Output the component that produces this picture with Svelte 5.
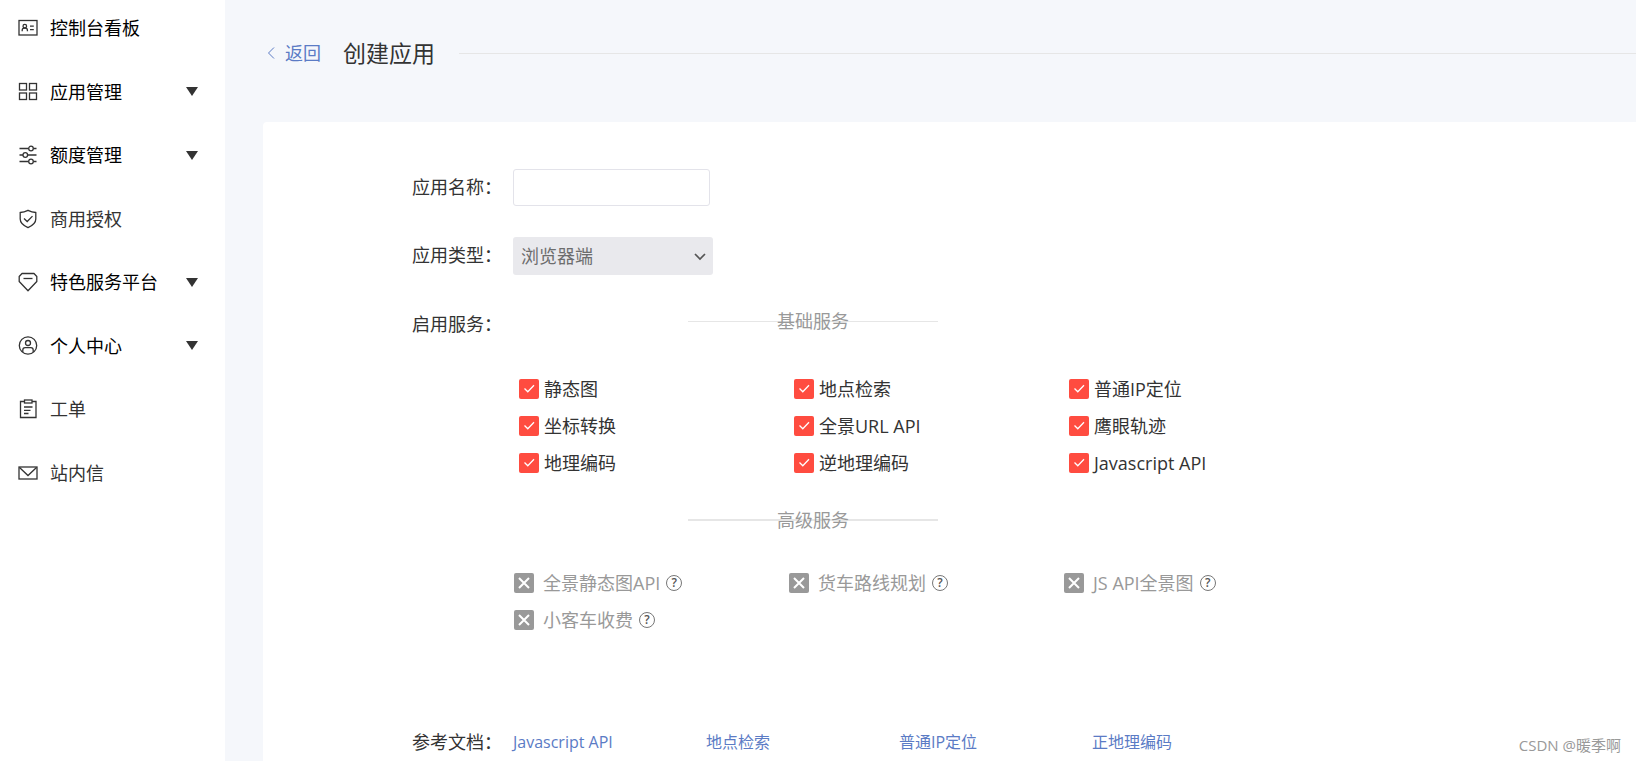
<script lang="ts">
    type MenuItem = { icon: string; label: string; expandable?: boolean; plain?: boolean };

    const menu: MenuItem[] = [
        { icon: 'board', label: '控制台看板' },
        { icon: 'grid', label: '应用管理', expandable: true },
        { icon: 'sliders', label: '额度管理', expandable: true },
        { icon: 'shield', label: '商用授权', plain: true },
        { icon: 'gem', label: '特色服务平台', expandable: true },
        { icon: 'user', label: '个人中心', expandable: true },
        { icon: 'ticket', label: '工单', plain: true },
        { icon: 'mail', label: '站内信', plain: true }
    ];

    let basicServices = $state([
        { name: '静态图', enabled: true },
        { name: '地点检索', enabled: true },
        { name: '普通IP定位', enabled: true },
        { name: '坐标转换', enabled: true },
        { name: '全景URL API', enabled: true },
        { name: '鹰眼轨迹', enabled: true },
        { name: '地理编码', enabled: true },
        { name: '逆地理编码', enabled: true },
        { name: 'Javascript API', enabled: true }
    ]);

    const advancedServices = ['全景静态图API', '货车路线规划', 'JS API全景图', '小客车收费'];
    const docs = ['Javascript API', '地点检索', '普通IP定位', '正地理编码'];

    let appName = $state('');
</script>

{#snippet menuIcon(name: string)}
    <svg class="menu-icon" width="20" height="20" viewBox="0 0 20 20" fill="none" stroke="currentColor" stroke-width="1.3" aria-hidden="true">
        {#if name === 'board'}
            <rect x="1" y="2.5" width="18" height="14.5" />
            <path d="M4.2 13.2V12q0-1.8 2.6-1.8T9.4 12v1.2M12 8.2h3.8M12 11.6h3.8" />
            <circle cx="6.8" cy="8.2" r="1.8" />
        {:else if name === 'grid'}
            <rect x="1.5" y="1.5" width="7" height="6.5" />
            <rect x="11.5" y="1.5" width="7" height="6.5" />
            <rect x="1.5" y="11" width="7" height="6.5" />
            <rect x="11.5" y="11" width="7" height="6.5" />
        {:else if name === 'sliders'}
            <path d="M1.5 3.5h9M15.5 3.5h3M1.5 10H5M10 10h8.5M1.5 16.5h9M15.5 16.5h3" />
            <circle cx="13" cy="3.5" r="2.3" />
            <circle cx="7.3" cy="10" r="2.3" />
            <circle cx="13" cy="16.5" r="2.3" />
        {:else if name === 'shield'}
            <path d="M10 1.3q3.8 2 7.8 2.2V10q0 5.2-7.8 8.6Q2.200 15.200 2.200 10V3.500Q6.200 3.300 10 1.300Z" />
            <path d="m6 9.500 3.200 3 5.300-5.400" />
        {:else if name === 'gem'}
            <path d="M4 1.500h12l2.800 3v5L10 18.700 1.200 9.500v-5Z" stroke-linejoin="round" />
            <path d="M5.500 6.500h9" />
        {:else if name === 'user'}
            <circle cx="10" cy="9.500" r="8.700" />
            <circle cx="10" cy="7" r="2.500" />
            <path d="M4.800 16v-2q0-2.300 2.300-2.300h5.800q2.300 0 2.300 2.300v2" />
        {:else if name === 'ticket'}
            <path d="M6.500 2.500h-4v16h15.500v-16h-4" />
            <rect x="6.500" y="1" width="7.500" height="3" />
            <path d="M6 8h8.500M6 11.300h6.500M6 14.500h4.500" />
        {:else}
            <rect x="1" y="4" width="18" height="12" />
            <path d="m1.500 4.500 8.500 8 8.500-8" />
        {/if}
    </svg>
{/snippet}

<div class="page">
    <nav class="sidebar">
        <ul class="menu">
            {#each menu as item}
                <li>
                    <button class="menu-item" class:plain={item.plain} type="button">
                        {@render menuIcon(item.icon)}
                        <span class="menu-label">{item.label}</span>
                        {#if item.expandable}
                            <span class="caret"></span>
                        {/if}
                    </button>
                </li>
            {/each}
        </ul>
    </nav>

    <main class="content">
        <header class="page-header">
            <a class="back" href="#back">
                <svg width="8" height="14" viewBox="0 0 8 14" fill="none" stroke="currentColor" aria-hidden="true">
                    <path d="M7 1.5 1.5 7 7 12.5" />
                </svg>
                返回
            </a>
            <h1>创建应用</h1>
            <div class="header-line"></div>
        </header>

        <form class="panel">
            <div class="row">
                <label class="row-label" for="app-name">应用名称：</label>
                <input id="app-name" class="text-input" type="text" bind:value={appName} />
            </div>

            <div class="row">
                <label class="row-label" for="app-type">应用类型：</label>
                <div class="select-wrap">
                    <select id="app-type" disabled>
                        <option>浏览器端</option>
                    </select>
                    <svg class="select-arrow" width="12" height="8" viewBox="0 0 12 8" fill="none" stroke="currentColor" stroke-width="1.7" aria-hidden="true">
                        <path d="m1 1 5 5 5-5" />
                    </svg>
                </div>
            </div>

            <div class="row">
                <span class="row-label">启用服务：</span>
                <div class="services">
                    <h2 class="section-title">基础服务</h2>
                    <div class="service-grid basic">
                        {#each basicServices as service}
                            <label class="service">
                                <span class="box">
                                    <input type="checkbox" bind:checked={service.enabled} />
                                    <svg viewBox="0 0 20 20" fill="none" stroke="#fff" stroke-width="1.3" aria-hidden="true">
                                        <path d="m5.5 9.5 3.3 3.3L15 6.3" />
                                    </svg>
                                </span>
                                {service.name}
                            </label>
                        {/each}
                    </div>

                    <h2 class="section-title thick">高级服务</h2>
                    <div class="service-grid advanced">
                        {#each advancedServices as name}
                            <div class="service-cell">
                                <label class="service">
                                    <span class="box">
                                        <input type="checkbox" disabled />
                                        <svg viewBox="0 0 20 20" fill="none" stroke="#fff" stroke-width="2" aria-hidden="true">
                                            <path d="m5 5 10 10M15 5 5 15" />
                                        </svg>
                                    </span>
                                    {name}
                                </label>
                                <button class="help" type="button" aria-label="{name}说明">?</button>
                            </div>
                        {/each}
                    </div>
                </div>
            </div>

            <div class="row docs-row">
                <span class="row-label">参考文档：</span>
                <div class="docs">
                    {#each docs as doc}
                        <a href="#doc">{doc}</a>
                    {/each}
                </div>
            </div>
        </form>
    </main>

    <div class="watermark">CSDN @暖季啊</div>
</div>

<style>
    :global(body) {
        margin: 0;
    }

    .page {
        position: relative;
        display: flex;
        min-height: 100vh;
        overflow: hidden;
        background: #f5f7fb;
        color: #333;
        font-family: 'Open Sans', 'Noto Sans CJK SC', sans-serif;
        font-size: 18px;
        line-height: 24px;
    }

    button,
    input,
    select {
        box-sizing: border-box;
        margin: 0;
        font: inherit;
        color: inherit;
    }

    a {
        color: #5b7bc5;
        text-decoration: none;
    }

    .sidebar {
        flex: 0 0 225px;
        background: #fff;
    }

    .menu {
        display: flex;
        flex-direction: column;
        justify-content: space-between;
        min-height: 485px;
        margin: 0;
        padding: 8px 0;
        list-style: none;
    }

    .menu-item {
        display: flex;
        align-items: center;
        width: 100%;
        height: 40px;
        padding: 0 27px 0 18px;
        border: 0;
        background: none;
        color: #000;
        text-align: left;
        cursor: pointer;
    }

    .menu-item.plain {
        color: #333;
    }

    .menu-icon {
        flex: none;
        margin-right: 12px;
        color: #333;
    }

    .menu-label {
        flex: 1;
        white-space: nowrap;
    }

    .caret {
        border: 6px solid transparent;
        border-top: 9px solid #333;
        border-bottom: 0;
    }

    .content {
        flex: 1;
        display: flex;
        flex-direction: column;
        min-width: 0;
        padding-left: 38px;
    }

    .page-header {
        display: flex;
        align-items: center;
        height: 106px;
        margin-bottom: 16px;
    }

    .back {
        display: flex;
        align-items: center;
        gap: 10px;
        padding-left: 4px;
    }

    h1 {
        margin: 0 24px 0 22px;
        font-size: 23px;
        font-weight: normal;
        line-height: 32px;
    }

    .header-line {
        flex: 1;
        height: 1px;
        background: #e6e6e6;
    }

    .panel {
        flex: 1;
        padding: 47px 0 0 149px;
        border-radius: 4px 0 0 0;
        background: #fff;
    }

    .row {
        display: flex;
        margin-bottom: 31px;
    }

    .row-label {
        flex: 0 0 101px;
        line-height: 37px;
    }

    .text-input {
        width: 197px;
        height: 37px;
        padding: 0 8px;
        border: 1px solid #e3e3ea;
        border-radius: 3px;
        background: #fff;
    }

    .select-wrap {
        position: relative;
        width: 200px;
    }

    select {
        display: block;
        width: 100%;
        height: 38px;
        padding: 0 8px;
        border: 0;
        border-radius: 3px;
        background: #e9e9ed;
        color: #6d6d6d;
        opacity: 1;
        appearance: none;
    }

    .select-arrow {
        position: absolute;
        top: 16px;
        right: 7px;
        color: #555;
        pointer-events: none;
    }

    /* the rule runs straight through the heading */
    .section-title {
        width: 600px;
        margin: 0;
        background: linear-gradient(#e6e6e6, #e6e6e6) center / 250px 1px no-repeat;
        color: #999;
        font-size: 18px;
        font-weight: normal;
        line-height: 30px;
        text-align: center;
    }

    .section-title.thick {
        background-size: 250px 2px;
    }

    .service-grid {
        display: grid;
        grid-template-columns: repeat(3, 275px);
        grid-auto-rows: 37px;
        align-items: center;
    }

    .basic {
        margin: 34px 0 24px;
        padding-left: 6px;
    }

    .advanced {
        margin-top: 29px;
        padding-left: 1px;
        color: #999;
    }

    .service-cell {
        display: flex;
        align-items: center;
        gap: 6px;
    }

    .service {
        display: flex;
        align-items: center;
        gap: 5px;
        white-space: nowrap;
    }

    .advanced .service {
        gap: 9px;
    }

    .box {
        position: relative;
        width: 20px;
        height: 20px;
    }

    .box input {
        display: block;
        width: 20px;
        height: 20px;
        border-radius: 2px;
        background: #fff;
        box-shadow: inset 0 0 0 1px #ccc;
        appearance: none;
    }

    .box input:checked {
        background: #ff4c40;
        box-shadow: none;
    }

    .box input:disabled {
        background: #999;
        box-shadow: none;
    }

    .box svg {
        position: absolute;
        inset: 0;
        pointer-events: none;
    }

    .help {
        display: flex;
        align-items: center;
        justify-content: center;
        width: 16px;
        height: 16px;
        padding: 0;
        border: 1px solid #777;
        border-radius: 50%;
        background: none;
        color: #555;
        font-size: 12px;
        font-weight: 600;
        line-height: 14px;
    }

    .docs-row {
        margin: 86px 0 0;
    }

    .docs {
        display: grid;
        grid-template-columns: repeat(4, 193px);
        font-size: 16px;
        line-height: 37px;
    }

    .watermark {
        position: absolute;
        right: 15px;
        bottom: 4px;
        color: #999;
        font-size: 15px;
        text-shadow: 1px 1px 0 #fff;
    }
</style>
